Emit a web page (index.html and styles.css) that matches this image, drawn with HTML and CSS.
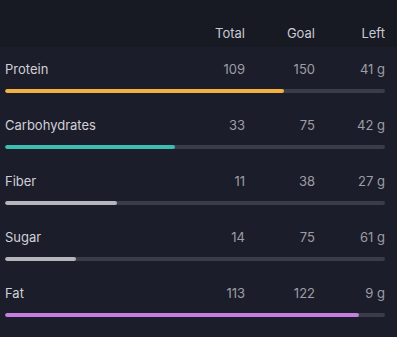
FILE: index.html
```html
<!DOCTYPE html>
<html>
<head>
<meta charset="utf-8">
<link rel="stylesheet" href="styles.css">
</head>
<body>
<div class="table">
  <div class="head">
    <span></span>
    <span class="num">Total</span>
    <span class="num">Goal</span>
    <span class="num">Left</span>
  </div>
  <div class="row">
    <div class="cells">
      <span class="name">Protein</span>
      <span class="num">109</span>
      <span class="num">150</span>
      <span class="num">41 g</span>
    </div>
    <div class="track"><div class="fill orange" style="width:73.3%"></div></div>
  </div>
  <div class="row">
    <div class="cells">
      <span class="name">Carbohydrates</span>
      <span class="num">33</span>
      <span class="num">75</span>
      <span class="num">42 g</span>
    </div>
    <div class="track"><div class="fill teal" style="width:44.7%"></div></div>
  </div>
  <div class="row">
    <div class="cells">
      <span class="name">Fiber</span>
      <span class="num">11</span>
      <span class="num">38</span>
      <span class="num">27 g</span>
    </div>
    <div class="track"><div class="fill gray" style="width:29.5%"></div></div>
  </div>
  <div class="row">
    <div class="cells">
      <span class="name">Sugar</span>
      <span class="num">14</span>
      <span class="num">75</span>
      <span class="num">61 g</span>
    </div>
    <div class="track"><div class="fill gray" style="width:18.7%"></div></div>
  </div>
  <div class="row">
    <div class="cells">
      <span class="name">Fat</span>
      <span class="num">113</span>
      <span class="num">122</span>
      <span class="num">9 g</span>
    </div>
    <div class="track"><div class="fill purple" style="width:93.2%"></div></div>
  </div>
</div>
</body>
</html>
```
FILE: styles.css
```css
html, body {
  margin: 0;
  padding: 0;
  background: #1c1d2a;
  font-family: Inter, "Noto Sans", sans-serif;
  font-size: 13px;
}
.table {
  width: 397px;
}
.head {
  display: grid;
  grid-template-columns: 1fr 70px 70px 70px;
  height: 47px;
  box-sizing: border-box;
  padding: 25px 12px 0 5px;
  background: #171923;
  color: #c9cad0;
  line-height: 16px;
}
.row {
  height: 56px;
  box-sizing: border-box;
  padding: 14px 12px 0 5px;
}
.cells {
  display: grid;
  grid-template-columns: 1fr 70px 70px 70px;
  line-height: 16px;
  color: #9c9ea6;
}
.name {
  color: #d0d1d7;
}
.num {
  text-align: right;
}
.track {
  margin-top: 12px;
  height: 4px;
  border-radius: 2px;
  background: #3a3c48;
  overflow: hidden;
}
.fill {
  height: 100%;
  border-radius: 2px;
}
.orange { background: #f5b042; }
.teal { background: #3dbdb0; }
.gray { background: #b5b6bb; }
.purple { background: #c77ee0; }
```
